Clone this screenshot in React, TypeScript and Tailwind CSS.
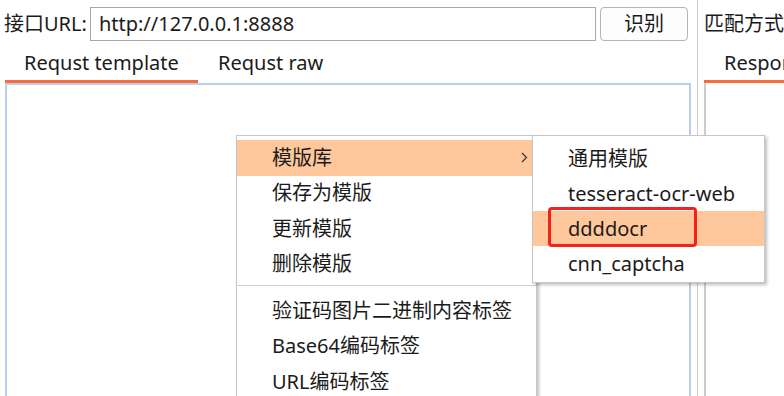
import React from 'react';

const font = { fontFamily: '"Noto Sans", "Noto Sans CJK SC", sans-serif' };

const Chevron: React.FC = () => (
  <svg width="7" height="11" viewBox="0 0 7 11" className="absolute right-[8px] top-[12px]">
    <path d="M1 1 L5.5 5.5 L1 10" fill="none" stroke="#333" strokeWidth="1.2" />
  </svg>
);

const mainTop = ['模版库', '保存为模版', '更新模版', '删除模版'];
const mainBottom = ['验证码图片二进制内容标签', 'Base64编码标签', 'URL编码标签'];
const subItems = ['通用模版', 'tesseract-ocr-web', 'ddddocr', 'cnn_captcha'];

const App: React.FC = () => {
  return (
    <div
      className="relative flex w-[784px] h-[396px] overflow-hidden bg-white text-[20px] text-[#1b1b1b]"
      style={font}
    >
      {/* left column */}
      <div className="flex flex-col w-[697px] shrink-0">
        <div className="flex items-center h-[34px] mt-[7px] pl-[4px]">
          <span className="leading-none whitespace-nowrap">接口URL:</span>
          <div className="ml-[3px] w-[506px] h-[34px] border border-[#a8a8a8] bg-white flex items-center pl-[8px] whitespace-nowrap">
            http://127.0.0.1:8888
          </div>
          <button className="ml-[4px] w-[88px] h-[34px] border border-[#b4b4b4] rounded-[4px] bg-[#fdfdfd] text-[20px]">
            识别
          </button>
        </div>
        <div className="flex items-end h-[42px] pl-[5px]">
          <div className="w-[193px] pl-[19px] pb-[4px] border-b-[3px] border-[#ff6a3d] leading-[26px] whitespace-nowrap">
            Requst template
          </div>
          <div className="pl-[20px] pb-[7px] leading-[26px] whitespace-nowrap">Requst raw</div>
        </div>
        <div className="ml-[5px] w-[686px] flex-1 border-2 border-b-0 border-[#b6d0ee] bg-white" />
      </div>

      {/* divider */}
      <div className="w-px shrink-0 bg-[#cfcfcf]" />

      {/* right column */}
      <div className="flex flex-col flex-1 pl-[6px] min-w-0">
        <div className="flex items-center h-[34px] mt-[7px] whitespace-nowrap">匹配方式</div>
        <div className="flex items-end h-[42px]">
          <div className="w-full pl-[20px] pb-[4px] border-b-[3px] border-[#ff6a3d] leading-[26px] whitespace-nowrap">
            Response
          </div>
        </div>
        <div className="flex-1 border-l-2 border-[#cccccc]" />
      </div>

      {/* context menu */}
      <div className="absolute left-[236px] top-[135px] w-[301px] h-[300px] border border-[#c6c6c6] bg-white pt-[4px] shadow-[2px_2px_3px_rgba(0,0,0,0.25)]">
        {mainTop.map((t, i) => (
          <div
            key={t}
            className={`relative h-[35.5px] flex items-center pl-[35px] ${i === 0 ? 'bg-[#ffc89c]' : ''}`}
          >
            {t}
            {i === 0 && <Chevron />}
          </div>
        ))}
        <div className="mt-[3px] mb-[7px] h-px bg-[#d0d0d0]" />
        {mainBottom.map((t) => (
          <div key={t} className="h-[35.5px] flex items-center pl-[35px] whitespace-nowrap">
            {t}
          </div>
        ))}
      </div>

      {/* submenu */}
      <div className="absolute left-[532px] top-[135px] w-[233px] h-[148px] border border-[#c6c6c6] bg-white pt-[5px] shadow-[2px_2px_3px_rgba(0,0,0,0.25)]">
        {subItems.map((t, i) => (
          <div
            key={t}
            className={`h-[35px] flex items-center pl-[35px] whitespace-nowrap ${i === 2 ? 'bg-[#ffc89c]' : ''}`}
          >
            {t}
          </div>
        ))}
        <div className="absolute left-[15px] top-[71px] w-[149px] h-[40px] border-[3px] border-[#f3221b] rounded-[4px]" />
      </div>
    </div>
  );
};

export default App;
